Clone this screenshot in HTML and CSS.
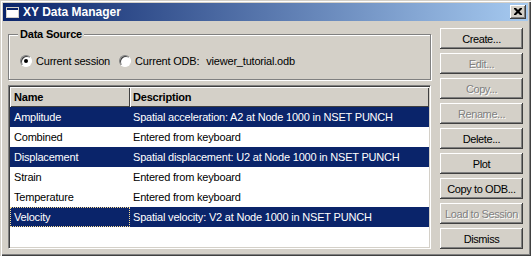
FILE: index.html
```html
<!DOCTYPE html>
<html lang="en">
<head>
    <meta charset="UTF-8">
    <title>XY Data Manager</title>
    <link rel="stylesheet" href="styles.css">
</head>
<body>
    <div class="window">
        <div class="titlebar">
            <svg class="title-icon" width="14" height="16" viewBox="0 0 14 16">
                <rect x="0.5" y="3.5" width="12" height="10" fill="#fff" stroke="#d4d0c8"/>
                <rect x="1" y="4" width="11" height="2" fill="#0a246a"/>
            </svg>
            <span class="title">XY Data Manager</span>
            <div class="close">
                <svg width="8" height="7" viewBox="0 0 8 7">
                    <path d="M0 0h2l2 2 2-2h2v1l-2.5 2.5L8 6v1H6L4 5 2 7H0V6l2.5-2.5L0 1z" fill="#000"/>
                </svg>
            </div>
        </div>

        <div class="content">
            <div class="main">
                <fieldset class="group">
                    <legend>Data Source</legend>
                    <div class="radio-row">
                        <label class="radio"><span class="radio-box checked"></span>Current session</label>
                        <label class="radio"><span class="radio-box"></span>Current ODB:</label>
                        <span class="odb-name">viewer_tutorial.odb</span>
                    </div>
                </fieldset>

                <div class="list">
                    <div class="row list-head">
                        <div class="cell head-cell">Name</div>
                        <div class="cell head-cell">Description</div>
                    </div>
                    <div class="row selected">
                        <div class="cell">Amplitude</div>
                        <div class="cell">Spatial acceleration: A2 at Node 1000 in NSET PUNCH</div>
                    </div>
                    <div class="row">
                        <div class="cell">Combined</div>
                        <div class="cell">Entered from keyboard</div>
                    </div>
                    <div class="row selected">
                        <div class="cell">Displacement</div>
                        <div class="cell">Spatial displacement: U2 at Node 1000 in NSET PUNCH</div>
                    </div>
                    <div class="row">
                        <div class="cell">Strain</div>
                        <div class="cell">Entered from keyboard</div>
                    </div>
                    <div class="row">
                        <div class="cell">Temperature</div>
                        <div class="cell">Entered from keyboard</div>
                    </div>
                    <div class="row selected">
                        <div class="cell focused">Velocity</div>
                        <div class="cell">Spatial velocity: V2 at Node 1000 in NSET PUNCH</div>
                    </div>
                </div>
            </div>

            <div class="buttons">
                <button class="btn">Create...</button>
                <button class="btn" disabled>Edit...</button>
                <button class="btn" disabled>Copy...</button>
                <button class="btn" disabled>Rename...</button>
                <button class="btn">Delete...</button>
                <button class="btn">Plot</button>
                <button class="btn">Copy to ODB...</button>
                <button class="btn" disabled>Load to Session</button>
                <button class="btn">Dismiss</button>
            </div>
        </div>
    </div>
</body>
</html>
```

FILE: styles.css
```css
body {
    margin: 0;
    font-family: "Liberation Sans", Arial, sans-serif;
    font-size: 11px;
    letter-spacing: -0.2px;
    color: #000;
    background-color: #d4d0c8;
}
.window {
    width: 531px;
    height: 256px;
    box-sizing: border-box;
    padding: 3px;
    background-color: #d4d0c8;
    box-shadow: inset 1px 1px 0 #d4d0c8, inset 2px 2px 0 #fff,
                inset -1px -1px 0 #404040, inset -2px -2px 0 #808080;
}
.titlebar {
    height: 18px;
    display: flex;
    align-items: center;
    padding: 0 2px 0 3px;
    background: linear-gradient(to right, #0a246a, #a6caf0);
    color: white;
}
.title-icon {
    margin-right: 3px;
}
.title {
    flex: 1;
    font-weight: bold;
    font-size: 12px;
    letter-spacing: 0;
}
.close {
    width: 16px;
    height: 14px;
    box-sizing: border-box;
    display: flex;
    align-items: center;
    justify-content: center;
    padding: 0 1px 1px 0;
    background-color: #d4d0c8;
    box-shadow: inset -1px -1px 0 #404040, inset 1px 1px 0 #fff, inset -2px -2px 0 #808080;
}
.content {
    display: flex;
    gap: 9px;
    padding: 7px 0 0 5px;
}
.main {
    width: 423px;
    display: flex;
    flex-direction: column;
}
.group {
    margin: 0;
    padding: 13px 0 12px 11px;
    min-width: 0;
    border: 1px solid #808080;
    box-shadow: inset 1px 1px 0 #fff, 1px 1px 0 #fff;
}
.group legend {
    padding: 0 2px;
    margin-left: -2px;
    font-weight: bold;
    line-height: 13px;
    background-color: #d4d0c8;
}
.radio-row {
    display: flex;
    align-items: center;
    height: 13px;
}
.radio {
    display: flex;
    align-items: center;
    gap: 4px;
    margin-right: 9px;
}
.radio-box {
    width: 12px;
    height: 12px;
    box-sizing: border-box;
    border-radius: 50%;
    border: 1px solid;
    border-color: #808080 #fff #fff #808080;
    box-shadow: inset 1px 1px 0 #404040;
    background-color: white;
    display: flex;
    align-items: center;
    justify-content: center;
}
.radio-box.checked::after {
    content: "";
    width: 4px;
    height: 4px;
    border-radius: 50%;
    background-color: #000;
}
.odb-name {
    margin-left: -2px;
}
.list {
    margin-top: 5px;
    height: 164px;
    box-sizing: border-box;
    padding: 1px;
    background-color: white;
    border: 1px solid;
    border-color: #808080 #fff #fff #808080;
    box-shadow: inset 1px 1px 0 #404040, inset -1px -1px 0 #d4d0c8;
}
.row {
    display: grid;
    grid-template-columns: 120px 1fr;
    height: 20px;
    line-height: 20px;
    white-space: nowrap;
}
.cell {
    padding-left: 4px;
    box-sizing: border-box;
}
.cell + .cell {
    padding-left: 3px;
}
.head-cell {
    font-weight: bold;
    background-color: #d4d0c8;
    box-shadow: inset 1px 1px 0 #fff, inset -1px -1px 0 #404040;
}
.selected {
    background-color: #0a246a;
    color: white;
}
.focused {
    border: 1px dotted #f5db95;
    padding-left: 3px;
    line-height: 18px;
}
.buttons {
    width: 83px;
    display: flex;
    flex-direction: column;
    gap: 4px;
}
.btn {
    height: 21px;
    padding: 0;
    border: none;
    font-family: inherit;
    font-size: 11px;
    letter-spacing: -0.4px;
    white-space: nowrap;
    color: #000;
    background-color: #d4d0c8;
    box-shadow: inset -1px -1px 0 #404040, inset 1px 1px 0 #fff, inset -2px -2px 0 #808080;
}
.btn:disabled {
    color: #808080;
    text-shadow: 1px 1px 0 #fff;
}
```
